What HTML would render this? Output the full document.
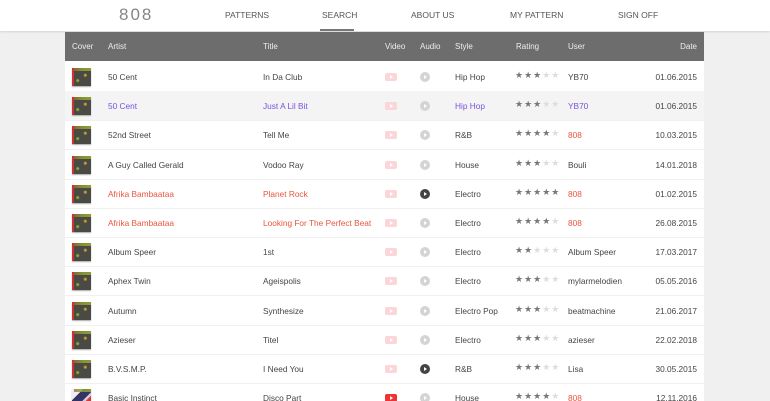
<!DOCTYPE html><html><head><style>
html,body{margin:0;width:770px;height:401px;overflow:hidden}
body{background:#f0f0f0;font-family:"Liberation Sans",sans-serif;position:relative}
.nav{position:absolute;left:0;top:0;width:770px;height:31px;background:#fff;box-shadow:0 1px 2px rgba(0,0,0,.12)}
.nav span{position:absolute;top:10px;font-size:8.5px;color:#555}
.logo{position:absolute;left:119px;top:5px;font-size:17px;color:#8a8580;letter-spacing:2px}
.ul{position:absolute;left:320px;top:29px;width:34px;height:2px;background:#777}
.tbl{position:absolute;left:65px;top:32px;width:639px;height:369px;background:#fff;overflow:hidden}
.hd{position:absolute;left:0;top:0;width:639px;height:29px;background:#6d6d6d}
.hd span{position:absolute;top:10px;font-size:8px;color:#eee}
.row{position:absolute;left:0;width:639px;height:29px;border-bottom:1px solid #f0f0f0}
.row span{position:absolute;top:10px;font-size:8.3px;color:#444;white-space:nowrap}
.cov{position:absolute;left:7px;top:6px;width:19px;height:18px;background:radial-gradient(circle at 30% 70%,#8a3 0 1px,transparent 2px),radial-gradient(circle at 70% 40%,#c93 0 1px,transparent 2px),linear-gradient(90deg,#c33 0 2px,#4a4a44 2px);box-shadow:0 1px 1px #aaa}
.cov:before{content:"";position:absolute;left:2px;top:0;width:17px;height:3px;background:linear-gradient(90deg,#a63,#8a3,#aa3);opacity:.8}
.vid{position:absolute;left:320px;top:11px;width:12px;height:8px;background:#fcd5d8;border-radius:2px}
.vid:after{content:"";position:absolute;left:5px;top:2px;border-left:3px solid #fff;border-top:2px solid transparent;border-bottom:2px solid transparent}
.vid.on{background:#e33}
.aud{position:absolute;left:355px;top:10px;width:10px;height:10px;border-radius:50%;background:#d4d4d4}
.aud:after{content:"";position:absolute;left:4px;top:3px;border-left:3px solid #fff;border-top:2px solid transparent;border-bottom:2px solid transparent}
.aud.on{background:#444}
.row span.st{left:450px;letter-spacing:1px;font-size:9px;color:#777;top:8px}
.st i{font-style:normal;color:#ddd}
.row span.dt{right:7px}
.row span.pu{color:#7a52e0}.row span.rd{color:#e8553f}
</style></head><body>
<div class="nav"><div class="logo">808</div>
<span style="left:225px">PATTERNS</span><span style="left:322px">SEARCH</span><span style="left:411px">ABOUT US</span><span style="left:510px">MY PATTERN</span><span style="left:618px">SIGN OFF</span><div class="ul"></div></div>
<div class="tbl">
<div class="hd"><span style="left:7px">Cover</span><span style="left:43px">Artist</span><span style="left:198px">Title</span><span style="left:320px">Video</span><span style="left:355px">Audio</span><span style="left:390px">Style</span><span style="left:451px">Rating</span><span style="left:503px">User</span><span style="right:7px">Date</span></div>
</div>
<script>
var d=[["50 Cent","In Da Club","Hip Hop",3,"YB70","01.06.2015",0,0,""],
["50 Cent","Just A Lil Bit","Hip Hop",3,"YB70","01.06.2015",0,0,"p"],
["52nd Street","Tell Me","R&B",4,"808","10.03.2015",0,0,"u"],
["A Guy Called Gerald","Vodoo Ray","House",3,"Bouli","14.01.2018",0,0,""],
["Afrika Bambaataa","Planet Rock","Electro",5,"808","01.02.2015",0,1,"r"],
["Afrika Bambaataa","Looking For The Perfect Beat","Electro",4,"808","26.08.2015",0,0,"r"],
["Album Speer","1st","Electro",2,"Album Speer","17.03.2017",0,0,""],
["Aphex Twin","Ageispolis","Electro",3,"mylarmelodien","05.05.2016",0,0,""],
["Autumn","Synthesize","Electro Pop",3,"beatmachine","21.06.2017",0,0,""],
["Azieser","Titel","Electro",3,"azieser","22.02.2018",0,0,""],
["B.V.S.M.P.","I Need You","R&B",3,"Lisa","30.05.2015",0,1,""],
["Basic Instinct","Disco Part","House",4,"808","12.11.2016",1,0,"u"]];
var t=document.querySelector('.tbl'),h='';
d.forEach(function(r,i){var s='';for(var k=0;k<5;k++)s+=k<r[3]?'★':'<i>★</i>';
var m=r[8]=='p'?'pu':r[8]=='r'?'rd':'',u=r[8]?(r[8]=='p'?'pu':'rd'):'';
var cv=i==11?'<div class="cov" style="background:linear-gradient(135deg,#eee 0 30%,#336 30% 60%,#ccd 60% 70%,#d33 70%)"></div>':'<div class="cov"></div>';
h+='<div class="row" style="top:'+(30+i*29.2)+'px;'+(i==1?'background:#f4f4f4':'')+'">'+cv+'<span class="'+m+'" style="left:43px">'+r[0]+'</span><span class="'+m+'" style="left:198px">'+r[1]+'</span><div class="vid'+(r[6]?' on':'')+'"></div><div class="aud'+(r[7]?' on':'')+'"></div><span class="'+(r[8]=='p'?'pu':'')+'" style="left:390px">'+r[2]+'</span><span class="st">'+s+'</span><span class="'+u+'" style="left:503px">'+r[4]+'</span><span class="dt">'+r[5]+'</span></div>';});
t.innerHTML+=h;
</script>
</body></html>
